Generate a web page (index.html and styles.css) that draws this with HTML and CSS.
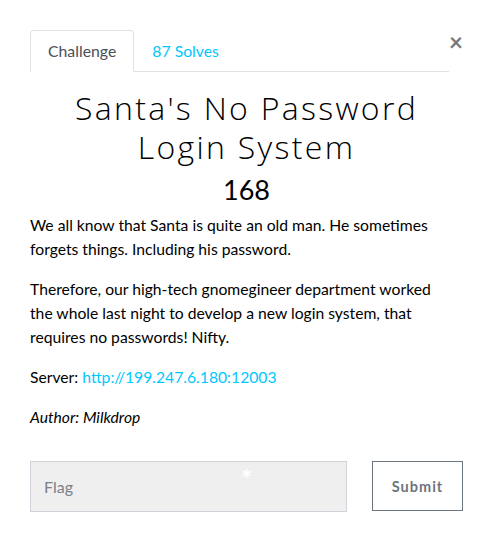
FILE: index.html
```html
<!DOCTYPE html>
<html>
<head>
<meta charset="utf-8">
<link rel="stylesheet" href="styles.css">
</head>
<body>
<div class="modal">
  <div class="head">
    <ul class="tabs">
      <li class="tab active">Challenge</li>
      <li class="tab link">87 Solves</li>
    </ul>
    <span class="close">&times;</span>
  </div>
  <h1 class="title">Santa's No Password Login System</h1>
  <div class="value">168</div>
  <div class="desc">
    <p>We all know that Santa is quite an old man. He sometimes forgets things. Including his password.</p>
    <p>Therefore, our high-tech gnomegineer department worked the whole last night to develop a new login system, that requires no passwords! Nifty.</p>
    <p>Server: <a href="#">http://199.247.6.180:12003</a></p>
    <p><em>Author: Milkdrop</em></p>
  </div>
  <form class="flag-form">
    <div class="input-wrap">
      <input class="flag" type="text" placeholder="Flag">
      <span class="star">*</span>
    </div>
    <button class="submit" type="button">Submit</button>
  </form>
</div>
</body>
</html>
```
FILE: styles.css
```css
html, body {
  margin: 0;
  padding: 0;
  background: #fff;
}
body {
  font-family: Lato, "Open Sans", sans-serif;
  color: #212529;
}
.modal {
  padding: 30px 30px 0 30px;
}
.head {
  display: flex;
  align-items: flex-start;
}
.tabs {
  list-style: none;
  margin: 0;
  padding: 0;
  display: flex;
  flex: 1;
  border-bottom: 1px solid #dee2e6;
  max-width: 420px;
}
.tab {
  font-size: 15.8px;
  line-height: 22px;
  padding: 9px 17px 9px 17px;
  margin-bottom: -1px;
  border: 1px solid transparent;
  border-radius: 4px 4px 0 0;
}
.tab.active {
  color: #495057;
  border-color: #dee2e6 #dee2e6 #fff;
  background: #fff;
}
.tab.link {
  color: #00c8ff;
}
.close {
  font-size: 24px;
  font-weight: 700;
  color: #777;
  line-height: 1;
  margin-left: auto;
  margin-top: 0px;
  margin-right: 0px;
}
.title {
  font-family: "Open Sans", sans-serif;
  font-weight: 300;
  font-size: 32px;
  letter-spacing: 2.3px;
  line-height: 39px;
  text-align: center;
  margin: 16px auto 0 auto;
  max-width: 400px;
  color: #000;
}
.value {
  text-align: center;
  font-size: 27px;
  line-height: 32px;
  font-weight: 400;
  color: #000;
  margin-top: 8px;
}
.desc {
  font-size: 15.7px;
  line-height: 24px;
  color: #000;
  margin-top: 7px;
  max-width: 420px;
}
.desc p {
  margin: 0 0 16px 0;
}
.desc a {
  color: #00c8ff;
  text-decoration: none;
}
.flag-form {
  display: flex;
  margin-top: 32px;
  gap: 25px;
}
.input-wrap {
  position: relative;
  width: 317px;
}
.flag {
  box-sizing: border-box;
  width: 100%;
  height: 51px;
  background: #efefef;
  border: 1px solid #ced4da;
  border-radius: 0;
  padding: 0 13px;
  font-family: Lato, sans-serif;
  font-size: 16px;
  color: #495057;
  outline: none;
}
.flag::placeholder {
  color: #7a8188;
}
.star {
  position: absolute;
  left: 211px;
  top: 5px;
  color: #fff;
  font-size: 26px;
  line-height: 1;
  font-weight: 700;
}
.submit {
  box-sizing: border-box;
  width: 91px;
  height: 50px;
  background: #fff;
  border: 1px solid #6c757d;
  border-radius: 0;
  color: #6c757d;
  font-family: Lato, sans-serif;
  font-weight: 700;
  font-size: 14.5px;
  letter-spacing: 1px;
}
```
